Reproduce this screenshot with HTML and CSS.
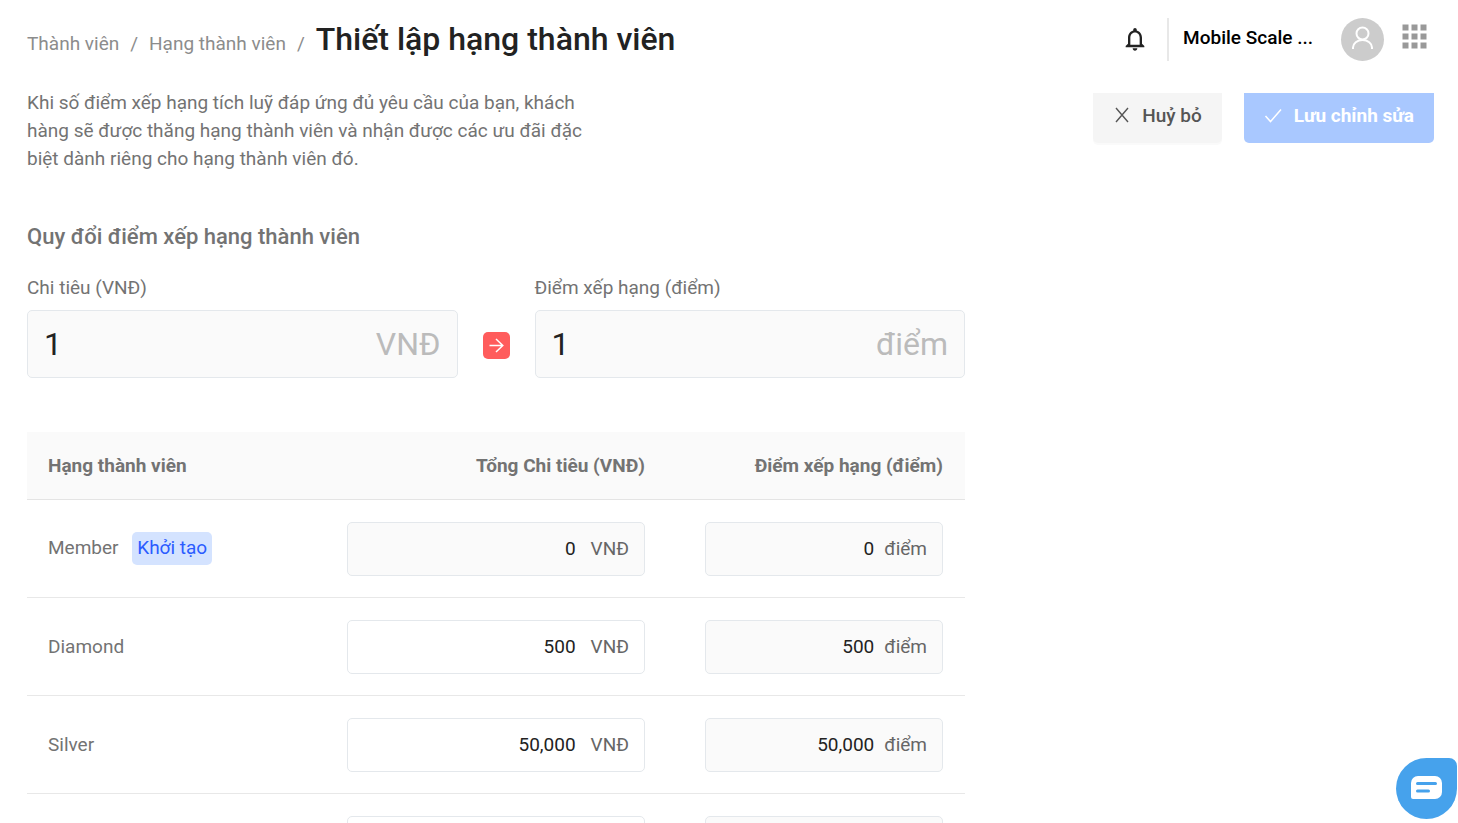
FILE: index.html
```html
<!DOCTYPE html>
<html lang="vi">
<head>
    <meta charset="UTF-8">
    <meta name="viewport" content="width=device-width, initial-scale=1.0">
    <title>Thiết lập hạng thành viên</title>
    <link rel="stylesheet" href="styles.css">
</head>
<body>
    <header class="header">
        <nav class="breadcrumb">
            <a href="#">Thành viên</a>
            <span class="slash">/</span>
            <a href="#">Hạng thành viên</a>
            <span class="slash">/</span>
            <h1>Thiết lập hạng thành viên</h1>
        </nav>
        <div class="account">
            <button class="icon-btn bell" aria-label="Thông báo">
                <svg width="28" height="28" viewBox="0 0 24 24" fill="#222"><path d="M12 22c1.1 0 2-.9 2-2h-4c0 1.1.9 2 2 2zm6-6v-5c0-3.070-1.630-5.640-4.500-6.320V4c0-.83-.67-1.500-1.500-1.500s-1.500.67-1.500 1.500v.68C7.640 5.360 6 7.920 6 11v5l-2 2v1h16v-1l-2-2zm-2 1H8v-6c0-2.480 1.510-4.500 4-4.500s4 2.020 4 4.500v6z"/></svg>
            </button>
            <div class="user">
                <span class="user-name">Mobile Scale ...</span>
                <span class="avatar">
                    <svg width="22" height="24" viewBox="0 0 22 24" fill="none" stroke="#fff" stroke-width="2"><circle cx="10.500" cy="7.500" r="6"/><path d="M1 23v-1.500a9.500 7.500 0 0 1 19 0V23"/></svg>
                </span>
            </div>
            <button class="icon-btn apps" aria-label="Ứng dụng">
                <svg width="25" height="25" viewBox="0 0 25 25" fill="#999"><path d="M0.500 0.500h6v6h-6zM9.500 0.500h6v6h-6zM18.500 0.500h6v6h-6zM0.500 9.500h6v6h-6zM9.500 9.500h6v6h-6zM18.500 9.500h6v6h-6zM0.500 18.500h6v6h-6zM9.500 18.500h6v6h-6zM18.500 18.500h6v6h-6z"/></svg>
            </button>
        </div>
    </header>

    <main class="content">
        <div class="intro">
            <p>Khi số điểm xếp hạng tích luỹ đáp ứng đủ yêu cầu của bạn, khách hàng sẽ được thăng hạng thành viên và nhận được các ưu đãi đặc biệt dành riêng cho hạng thành viên đó.</p>
            <div class="actions">
                <button class="btn btn-cancel">
                    <svg width="17" height="17" viewBox="0 0 17 17" fill="none" stroke="#555" stroke-width="1.400"><path d="M3 1l12 14M15 1L3 15"/></svg>
                    Huỷ bỏ
                </button>
                <button class="btn btn-save">
                    <svg width="18" height="16" viewBox="0 0 18 16" fill="none" stroke="#fff" stroke-width="1.500"><path d="M1.500 8l5 5.500L17 1.500"/></svg>
                    Lưu chỉnh sửa
                </button>
            </div>
        </div>

        <h2>Quy đổi điểm xếp hạng thành viên</h2>
        <div class="convert">
            <div class="field">
                <label for="spend">Chi tiêu (VNĐ)</label>
                <div class="box box-lg">
                    <input type="text" id="spend" value="1" readonly>
                    <span class="unit">VNĐ</span>
                </div>
            </div>
            <span class="arrow">
                <svg width="15" height="15" viewBox="0 0 15 15" fill="none" stroke="#fff" stroke-width="1.500"><path d="M0.500 7.500H14M7 1l6.800 6.500L7 14"/></svg>
            </span>
            <div class="field">
                <label for="point">Điểm xếp hạng (điểm)</label>
                <div class="box box-lg">
                    <input type="text" id="point" value="1" readonly>
                    <span class="unit">điểm</span>
                </div>
            </div>
        </div>

        <table class="ranks">
            <thead>
                <tr>
                    <th class="col-name">Hạng thành viên</th>
                    <th class="col-spend">Tổng Chi tiêu (VNĐ)</th>
                    <th class="col-point">Điểm xếp hạng (điểm)</th>
                </tr>
            </thead>
            <tbody>
                <tr>
                    <td>Member <span class="tag">Khởi tạo</span></td>
                    <td><div class="box"><input type="text" value="0" aria-label="Tổng chi tiêu Member" readonly><span class="unit">VNĐ</span></div></td>
                    <td><div class="box box-point"><input type="text" value="0" aria-label="Điểm Member" readonly><span class="unit">điểm</span></div></td>
                </tr>
                <tr>
                    <td>Diamond</td>
                    <td><div class="box editable"><input type="text" value="500" aria-label="Tổng chi tiêu Diamond"><span class="unit">VNĐ</span></div></td>
                    <td><div class="box box-point"><input type="text" value="500" aria-label="Điểm Diamond" readonly><span class="unit">điểm</span></div></td>
                </tr>
                <tr>
                    <td>Silver</td>
                    <td><div class="box editable"><input type="text" value="50,000" aria-label="Tổng chi tiêu Silver"><span class="unit">VNĐ</span></div></td>
                    <td><div class="box box-point"><input type="text" value="50,000" aria-label="Điểm Silver" readonly><span class="unit">điểm</span></div></td>
                </tr>
                <tr>
                    <td></td>
                    <td><div class="box editable"><input type="text" aria-label="Tổng chi tiêu"></div></td>
                    <td><div class="box box-point"><input type="text" aria-label="Điểm" readonly></div></td>
                </tr>
            </tbody>
        </table>
    </main>

    <button class="chat" aria-label="Chat">
        <svg width="31" height="23" viewBox="0 0 31 23"><path d="M7 0h17a7 7 0 0 1 7 7v9a7 7 0 0 1-7 7H2a2 2 0 0 1-2-2V7a7 7 0 0 1 7-7z" fill="#fff"/><path d="M6.500 7.500h18M6.500 15h11" stroke="#46a2ec" stroke-width="3" stroke-linecap="round"/></svg>
    </button>
</body>
</html>
```

FILE: styles.css
```css
* {
    box-sizing: border-box;
}
body {
    display: flex;
    flex-direction: column;
    margin: 0;
    height: 100vh;
    overflow: hidden;
    background: #fff;
    color: #737373;
    font-family: Roboto, sans-serif;
    font-size: 19px;
    line-height: 28px;
}
button, input {
    font: inherit;
}
h1, h2, p {
    margin: 0;
}
svg {
    display: block;
    flex: none;
}

/* Header */
.header {
    display: flex;
    flex: none;
    justify-content: space-between;
    padding: 18px 31px 28px 27px;
}
.breadcrumb {
    display: flex;
    align-items: baseline;
    gap: 11px;
    height: 43px;
    line-height: 42px;
    color: #8c8c8c;
}
.breadcrumb a {
    color: #8c8c8c;
    text-decoration: none;
}
.breadcrumb h1 {
    color: #222;
    font-size: 32px;
    font-weight: 500;
}
.account {
    display: flex;
    align-items: center;
    height: 43px;
}
.icon-btn {
    padding: 0;
    border: none;
    background: none;
    cursor: pointer;
}
.bell {
    margin-right: 18px;
    padding-bottom: 2px;
}
.apps {
    padding-bottom: 6px;
}
.user {
    display: flex;
    align-items: center;
    gap: 28px;
    height: 43px;
    margin-right: 18px;
    padding-left: 14px;
    border-left: 2px solid #e8e8e8;
}
.user-name {
    padding-bottom: 4px;
    color: #000;
    font-weight: 500;
}
.avatar {
    display: flex;
    align-items: center;
    justify-content: center;
    width: 43px;
    height: 43px;
    padding-bottom: 3px;
    border-radius: 50%;
    background: #ccc;
}

/* Intro */
.content {
    flex: 1;
    min-height: 0;
    overflow: hidden;
    padding: 0 24px 0 27px;
}
.intro {
    display: flex;
    justify-content: space-between;
    align-items: flex-start;
}
.intro p {
    max-width: 560px;
    padding: 0 0 50px;
}
.actions {
    display: flex;
    gap: 22px;
    margin-top: 4px;
}
.btn {
    display: flex;
    align-items: center;
    gap: 12px;
    height: 50px;
    padding: 0 20px 5px;
    border: none;
    border-radius: 0 0 5px 5px;
    font-weight: 500;
    cursor: pointer;
}
.btn-cancel {
    background: #f5f5f5;
    color: #555;
    box-shadow: 0 2px 0 #fafafa;
}
.btn-save {
    background: #a9c8ff;
    color: #fff;
    font-weight: 700;
}

/* Conversion */
h2 {
    margin-bottom: 23px;
    font-size: 22px;
    font-weight: 500;
}
.convert {
    display: flex;
    align-items: flex-end;
    gap: 25px;
    max-width: 938px;
    margin-bottom: 54px;
}
.field {
    flex: 1;
    min-width: 0;
}
.field label {
    display: block;
    margin-bottom: 8px;
}
.box {
    display: flex;
    align-items: center;
    gap: 15px;
    height: 54px;
    padding: 0 15px;
    border: 1px solid #e4e8ec;
    border-radius: 5px;
    background: #fafafa;
}
.box-point {
    gap: 10px;
}
.editable {
    background: #fff;
}
.box input {
    flex: 1;
    min-width: 0;
    padding: 0;
    border: none;
    outline: none;
    background: none;
    color: #222;
    text-align: right;
}
.unit {
    color: #666;
}
.box-lg {
    height: 68px;
    padding: 0 16px;
    font-size: 32px;
}
.box-lg input {
    text-align: left;
}
.box-lg .unit {
    color: #bbb;
}
.arrow {
    display: flex;
    flex: none;
    align-items: center;
    justify-content: center;
    width: 27px;
    height: 27px;
    margin-bottom: 19px;
    border-radius: 5px;
    background: #ff5c5c;
}

/* Rank table */
.ranks {
    width: 100%;
    max-width: 938px;
    border-spacing: 0;
    table-layout: fixed;
}
.ranks th {
    height: 68px;
    padding: 0 22px;
    border-bottom: 1px solid #e4e4e4;
    background: #fafafa;
    font-weight: 700;
    text-align: right;
}
.ranks th.col-name {
    width: 298px;
    text-align: left;
}
.ranks th.col-spend {
    width: 342px;
}
.ranks td {
    height: 98px;
    padding: 0 22px;
    border-bottom: 1px solid #e8e8e8;
}
.ranks th:first-child,
.ranks td:first-child {
    padding-left: 21px;
}
.ranks td:last-child {
    padding-left: 38px;
}
.tag {
    display: inline-block;
    margin-left: 9px;
    padding: 2px 5px 3px;
    border-radius: 5px;
    background: #d4e3ff;
    color: #2b5cff;
}

.chat {
    position: fixed;
    right: 1px;
    bottom: 4px;
    display: flex;
    align-items: center;
    justify-content: center;
    width: 61px;
    height: 61px;
    padding: 0 0 2px;
    border: none;
    border-radius: 50% 8px 50% 50%;
    background: #46a2ec;
    cursor: pointer;
}
```
